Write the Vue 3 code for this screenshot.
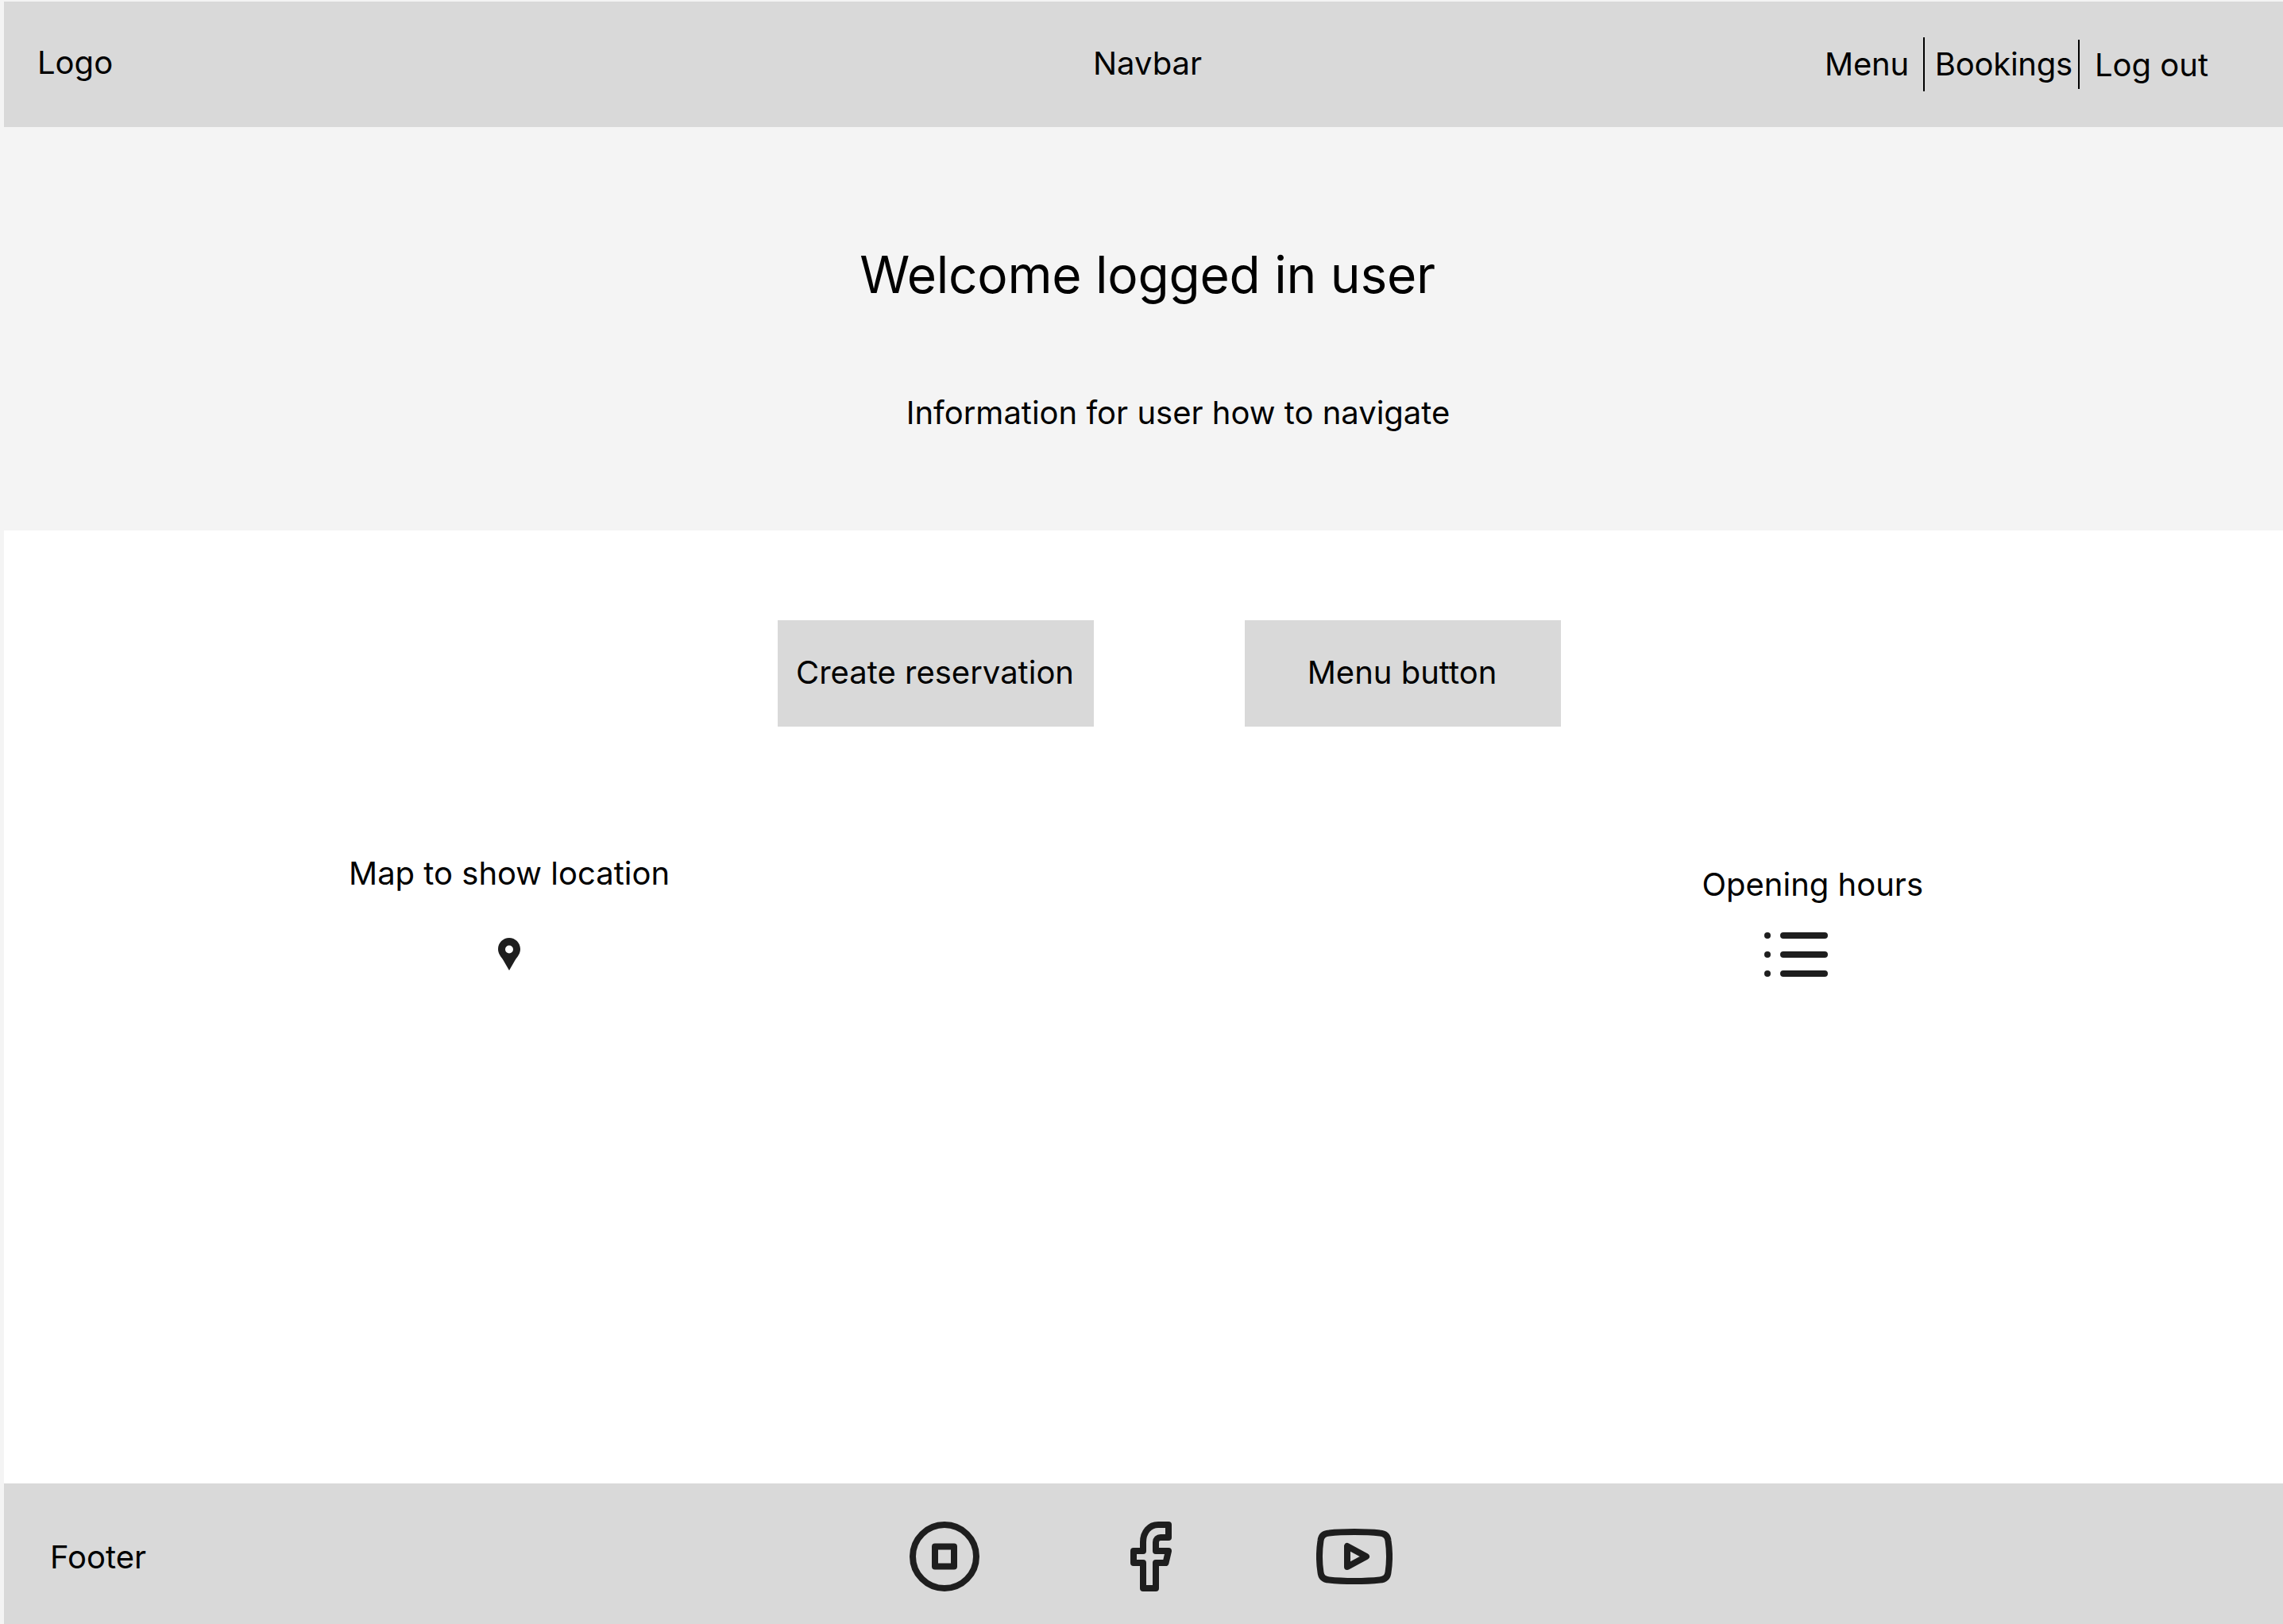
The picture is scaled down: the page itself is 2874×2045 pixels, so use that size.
<template>
  <div class="page">
    <header class="navbar">
      <div class="logo">Logo</div>
      <div class="nav-title">Navbar</div>
      <nav class="nav-links">
        <a class="link-menu">Menu</a>
        <a class="link-bookings">Bookings</a>
        <a class="link-logout">Log out</a>
      </nav>
    </header>

    <section class="hero">
      <h1>Welcome logged in user</h1>
      <p>Information for user how to navigate</p>
    </section>

    <main class="content">
      <div class="actions">
        <button class="btn">Create reservation</button>
        <button class="btn">Menu button</button>
      </div>

      <div class="info-row">
        <div class="info-map">
          <span>Map to show location</span>
          <svg class="pin" viewBox="0 0 28 41" width="28" height="41">
            <path fill-rule="evenodd" fill="#1e1e1e" d="M14 0C6.300 0 0 6.300 0 14c0 6 3.500 9.500 6.500 14L14 41l7.500-13c3-4.500 6.500-8 6.500-14C28 6.300 21.700 0 14 0Zm0 9.500a5 5 0 1 1 0 10 5 5 0 0 1 0-10Z" />
          </svg>
        </div>
        <div class="info-hours">
          <span>Opening hours</span>
          <svg class="list" viewBox="0 0 80 56" width="80" height="56">
            <circle cx="4" cy="4" r="4" fill="#1e1e1e" />
            <circle cx="4" cy="28" r="4" fill="#1e1e1e" />
            <circle cx="4" cy="52" r="4" fill="#1e1e1e" />
            <path d="M24 4h52M24 28h52M24 52h52" stroke="#1e1e1e" stroke-width="8" stroke-linecap="round" />
          </svg>
        </div>
      </div>
    </main>

    <footer class="footer">
      <div class="footer-label">Footer</div>
      <div class="socials">
        <svg viewBox="0 0 88 88" width="88" height="88" fill="none" stroke="#1e1e1e" stroke-width="8" stroke-linejoin="round">
          <circle cx="44" cy="44" r="40" />
          <rect x="32" y="31.500" width="24" height="25" />
        </svg>
        <svg viewBox="0 0 52 88" width="52" height="88" fill="none" stroke="#1e1e1e" stroke-width="8" stroke-linejoin="round">
          <path d="M48 4V20H38c-3.500 0-6 2.500-6 6V37H48L44.500 52H32V84H16V52H4V37H16V26C16 13 24 4 35 4Z" />
        </svg>
        <svg class="youtube" viewBox="0 0 96 70" width="96" height="70" fill="none" stroke="#1e1e1e" stroke-width="8" stroke-linejoin="round">
          <path d="M16 5.500C34 3.500 62 3.500 80 5.500C87 6 90 10 90.500 15C92.500 28 92.500 42 90.500 55C90 60 87 64 80 64.500C62 66.500 34 66.500 16 64.500C9 64 6 60 5.500 55C3.500 42 3.500 28 5.500 15C6 10 9 6 16 5.500Z" />
          <path d="M39 22V48L63 35Z" />
        </svg>
      </div>
    </footer>
  </div>
</template>

<script setup>
</script>

<style>
html, body {
  margin: 0;
  background: #f4f4f4;
}
</style>

<style scoped>
.page {
  width: 2874px;
  height: 2045px;
  padding: 2px 0 0 5px;
  box-sizing: border-box;
  display: flex;
  flex-direction: column;
  font-family: Inter, "Liberation Sans", sans-serif;
  color: #000;
}

.navbar {
  height: 158px;
  background: #d9d9d9;
  display: grid;
  grid-template-columns: 1fr auto 1fr;
  align-items: center;
  padding-left: 10px;
  font-size: 40px;
  flex-shrink: 0;
}

.logo {
  margin-left: 32px;
  margin-top: -5px;
}

.nav-title {
  margin-top: -4px;
}

.nav-links {
  justify-self: end;
  display: flex;
  align-items: center;
  margin-right: 94px;
  letter-spacing: -0.25px;
}

.link-menu {
  padding-right: 18px;
  border-right: 2px solid #000;
  height: 68px;
  line-height: 68px;
}

.link-bookings {
  padding: 0 7px 0 13px;
  border-right: 2px solid #000;
  height: 62px;
  line-height: 62px;
}

.link-logout {
  padding-left: 19px;
  letter-spacing: 0;
}

.hero {
  height: 508px;
  padding-left: 10px;
  box-sizing: border-box;
  background: #f4f4f4;
  display: flex;
  flex-direction: column;
  align-items: center;
  flex-shrink: 0;
}

.hero h1 {
  margin: 147px 0 0;
  font-size: 64px;
  font-weight: 400;
  line-height: 78px;
  letter-spacing: -0.25px;
}

.hero p {
  margin: 111px 0 0 77px;
  font-size: 40px;
  line-height: 48px;
}

.content {
  flex: 1;
  background: #fff;
}

.actions {
  display: flex;
  justify-content: center;
  gap: 190px;
  margin-top: 113px;
  padding-left: 65px;
}

.btn {
  width: 398px;
  height: 134px;
  background: #d9d9d9;
  border: none;
  font: inherit;
  font-size: 40px;
  color: #000;
  padding: 0 2px 4px 0;
}

.info-row {
  margin-top: 160px;
  padding: 0 453px 0 434px;
  display: flex;
  justify-content: space-between;
  align-items: flex-start;
  font-size: 40px;
}

.info-map {
  display: flex;
  flex-direction: column;
  align-items: center;
  gap: 57px;
}

.info-hours {
  margin-top: 14px;
  display: flex;
  flex-direction: column;
  align-items: center;
}

.list {
  margin: 36px 42px 0 0;
}

.footer {
  height: 177px;
  background: #d9d9d9;
  display: flex;
  align-items: center;
  flex-shrink: 0;
}

.footer-label {
  font-size: 40px;
  width: 1082px;
  margin-left: 58px;
  padding-top: 8px;
}

.socials {
  align-self: flex-start;
  margin-top: 48px;
  display: flex;
  align-items: center;
  gap: 190px;
}

.youtube {
  margin-left: -8px;
}
</style>
